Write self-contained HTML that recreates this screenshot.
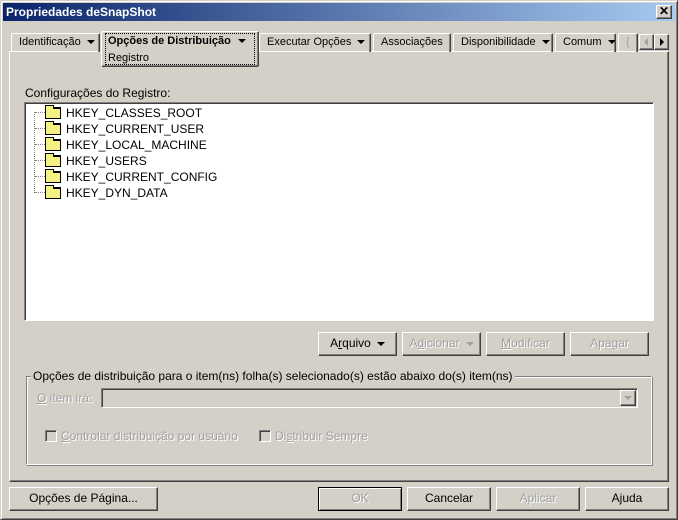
<!DOCTYPE html>
<html><head><style>
*{box-sizing:border-box;margin:0;padding:0}
body{width:678px;height:520px;background:#d4d0c8;font-family:"Liberation Sans",sans-serif;font-size:12px;color:#000;position:relative;overflow:hidden}
.a{position:absolute;white-space:nowrap}
.raised{border:1px solid;border-color:#fff #404040 #404040 #fff;box-shadow:inset -1px -1px 0 #808080}
.sunk{border:1px solid;border-color:#808080 #fff #fff #808080;box-shadow:inset 1px 1px 0 #404040}
.btn{position:absolute;height:24px;text-align:center;line-height:21px;font-size:12px;white-space:nowrap}
.dis{color:#a0a0a0;text-shadow:1px 1px 0 #fff}
.tab{position:absolute;top:33px;height:19px;border:1px solid;border-bottom:none;border-color:#fff #404040 #fff #fff;border-radius:2px 2px 0 0;padding-left:7px;line-height:16px;font-size:11px;box-shadow:inset -1px 0 0 #808080;white-space:nowrap;overflow:hidden}
.tri{display:inline-block;width:0;height:0;border-left:4px solid transparent;border-right:4px solid transparent;border-top:4px solid #000;vertical-align:middle;margin-left:6px}
.row{position:absolute;left:66px;font-size:12px;line-height:14px}
.fold{position:absolute;left:45px;width:16px;height:12px;background:#f6f080;border:1px solid #000;border-top-width:2px}
.fold:before{content:"";position:absolute;left:-1px;top:-4px;width:7px;height:3px;background:#f6f080;border:1px solid #000;border-bottom:none}
.h{position:absolute;left:35px;width:10px;border-top:1px dotted #808080}
u{text-decoration:underline}
</style></head><body>
<div class="a" style="left:0;top:0;width:678px;height:520px;border:1px solid;border-color:#d4d0c8 #404040 #404040 #d4d0c8;box-shadow:inset 1px 1px 0 #fff,inset -1px -1px 0 #808080"></div>
<div class="a" style="left:3px;top:3px;width:672px;height:18px;background:linear-gradient(to right,#0a246a,#a6caf0);color:#fff;font-weight:bold;font-size:12px;line-height:18px;padding-left:3px">Propriedades deSnapShot</div>
<div class="a raised" style="left:656px;top:5px;width:16px;height:14px;background:#d4d0c8;text-align:center;font-size:12px;line-height:11px;font-weight:bold">✕</div>

<div class="a" style="left:9px;top:51px;width:660px;height:431px;border:1px solid;border-color:#fff #404040 #404040 #fff;box-shadow:inset -1px -1px 0 #808080"></div>

<div class="tab" style="left:11px;width:89px">Identificação<span class="tri"></span></div>
<div class="tab" style="left:259px;width:112px">Executar Opções<span class="tri"></span></div>
<div class="tab" style="left:373px;width:78px">Associações</div>
<div class="tab" style="left:453px;width:100px">Disponibilidade<span class="tri"></span></div>
<div class="tab" style="left:555px;width:61px">Comum<span class="tri"></span></div>
<div class="tab" style="left:618px;width:20px;color:#a0a0a0">{</div>
<div class="a raised" style="left:639px;top:34px;width:15px;height:16px;background:#d4d0c8"><span class="a" style="left:4px;top:3px;border-top:4px solid transparent;border-bottom:4px solid transparent;border-right:4px solid #a0a0a0"></span></div>
<div class="a raised" style="left:654px;top:34px;width:15px;height:16px;background:#d4d0c8"><span class="a" style="left:5px;top:3px;border-top:4px solid transparent;border-bottom:4px solid transparent;border-left:4px solid #000"></span></div>

<div class="a" style="left:101px;top:31px;width:158px;height:36px;background:#d4d0c8;border:1px solid;border-color:#fff #404040 #404040 #fff;border-radius:2px;box-shadow:inset -1px -1px 0 #808080"></div>
<div class="a" style="left:105px;top:33px;width:150px;height:32px;border:1px dotted #000"></div>
<div class="a" style="left:108px;top:35px;font-weight:bold;font-size:11px">Opções de Distribuição<span class="tri" style="margin-left:7px"></span></div>
<div class="a" style="left:108px;top:52px;font-size:11px">Registro</div>

<div class="a" style="left:25px;top:86px;font-size:12px">Confi<u>g</u>urações do Registro:</div>
<div class="a sunk" style="left:24px;top:102px;width:630px;height:219px;background:#fff"></div>
<div class="a" style="left:34px;top:112px;height:81px;border-left:1px dotted #808080"></div>
<div class="h" style="top:112px"></div><div class="fold" style="top:107px"></div><div class="row" style="top:106px">HKEY_CLASSES_ROOT</div>
<div class="h" style="top:128px"></div><div class="fold" style="top:123px"></div><div class="row" style="top:122px">HKEY_CURRENT_USER</div>
<div class="h" style="top:144px"></div><div class="fold" style="top:139px"></div><div class="row" style="top:138px">HKEY_LOCAL_MACHINE</div>
<div class="h" style="top:160px"></div><div class="fold" style="top:155px"></div><div class="row" style="top:154px">HKEY_USERS</div>
<div class="h" style="top:176px"></div><div class="fold" style="top:171px"></div><div class="row" style="top:170px">HKEY_CURRENT_CONFIG</div>
<div class="h" style="top:192px"></div><div class="fold" style="top:187px"></div><div class="row" style="top:186px">HKEY_DYN_DATA</div>

<div class="btn raised" style="left:318px;top:332px;width:79px">A<u>r</u>quivo<span class="tri"></span></div>
<div class="btn raised dis" style="left:402px;top:332px;width:79px">A<u>d</u>icionar<span class="tri" style="border-top-color:#a0a0a0"></span></div>
<div class="btn raised dis" style="left:486px;top:332px;width:79px"><u>M</u>odificar</div>
<div class="btn raised dis" style="left:570px;top:332px;width:79px">Apa<u>g</u>ar</div>

<div class="a" style="left:26px;top:376px;width:626px;height:89px;border:1px solid;border-color:#808080 #fff #fff #808080;box-shadow:inset 1px 1px 0 #fff,1px 1px 0 #808080"></div>
<div class="a" style="left:31px;top:369px;background:#d4d0c8;padding:0 2px;font-size:12px">Opções de distribuição para o item(ns) folha(s) selecionado(s) estão abaixo do(s) item(ns)</div>
<div class="a dis" style="left:37px;top:391px;font-size:12px"><u>O</u> item irá:</div>
<div class="a sunk" style="left:101px;top:388px;width:537px;height:20px;background:#d4d0c8"></div>
<div class="a raised" style="left:620px;top:390px;width:16px;height:16px;background:#d4d0c8"><span class="a" style="left:3px;top:5px;border-left:4px solid transparent;border-right:4px solid transparent;border-top:4px solid #a0a0a0"></span></div>
<div class="a sunk" style="left:45px;top:430px;width:12px;height:12px"></div>
<div class="a dis" style="left:61px;top:429px;font-size:12px"><u>C</u>ontrolar distribuição por usuário</div>
<div class="a sunk" style="left:259px;top:430px;width:12px;height:12px"></div>
<div class="a dis" style="left:275px;top:429px;font-size:12px">Di<u>s</u>tribuir Sempre</div>

<div class="btn raised" style="left:9px;top:487px;width:149px">Opções de Pá<u>g</u>ina...</div>
<div class="btn dis" style="left:318px;top:487px;width:84px;border:1px solid #000;box-shadow:inset 1px 1px 0 #fff,inset -1px -1px 0 #808080">OK</div>
<div class="btn raised" style="left:407px;top:487px;width:84px">Cancelar</div>
<div class="btn raised dis" style="left:496px;top:487px;width:84px">Aplicar</div>
<div class="btn raised" style="left:585px;top:487px;width:84px">A<u>j</u>uda</div>
</body></html>
